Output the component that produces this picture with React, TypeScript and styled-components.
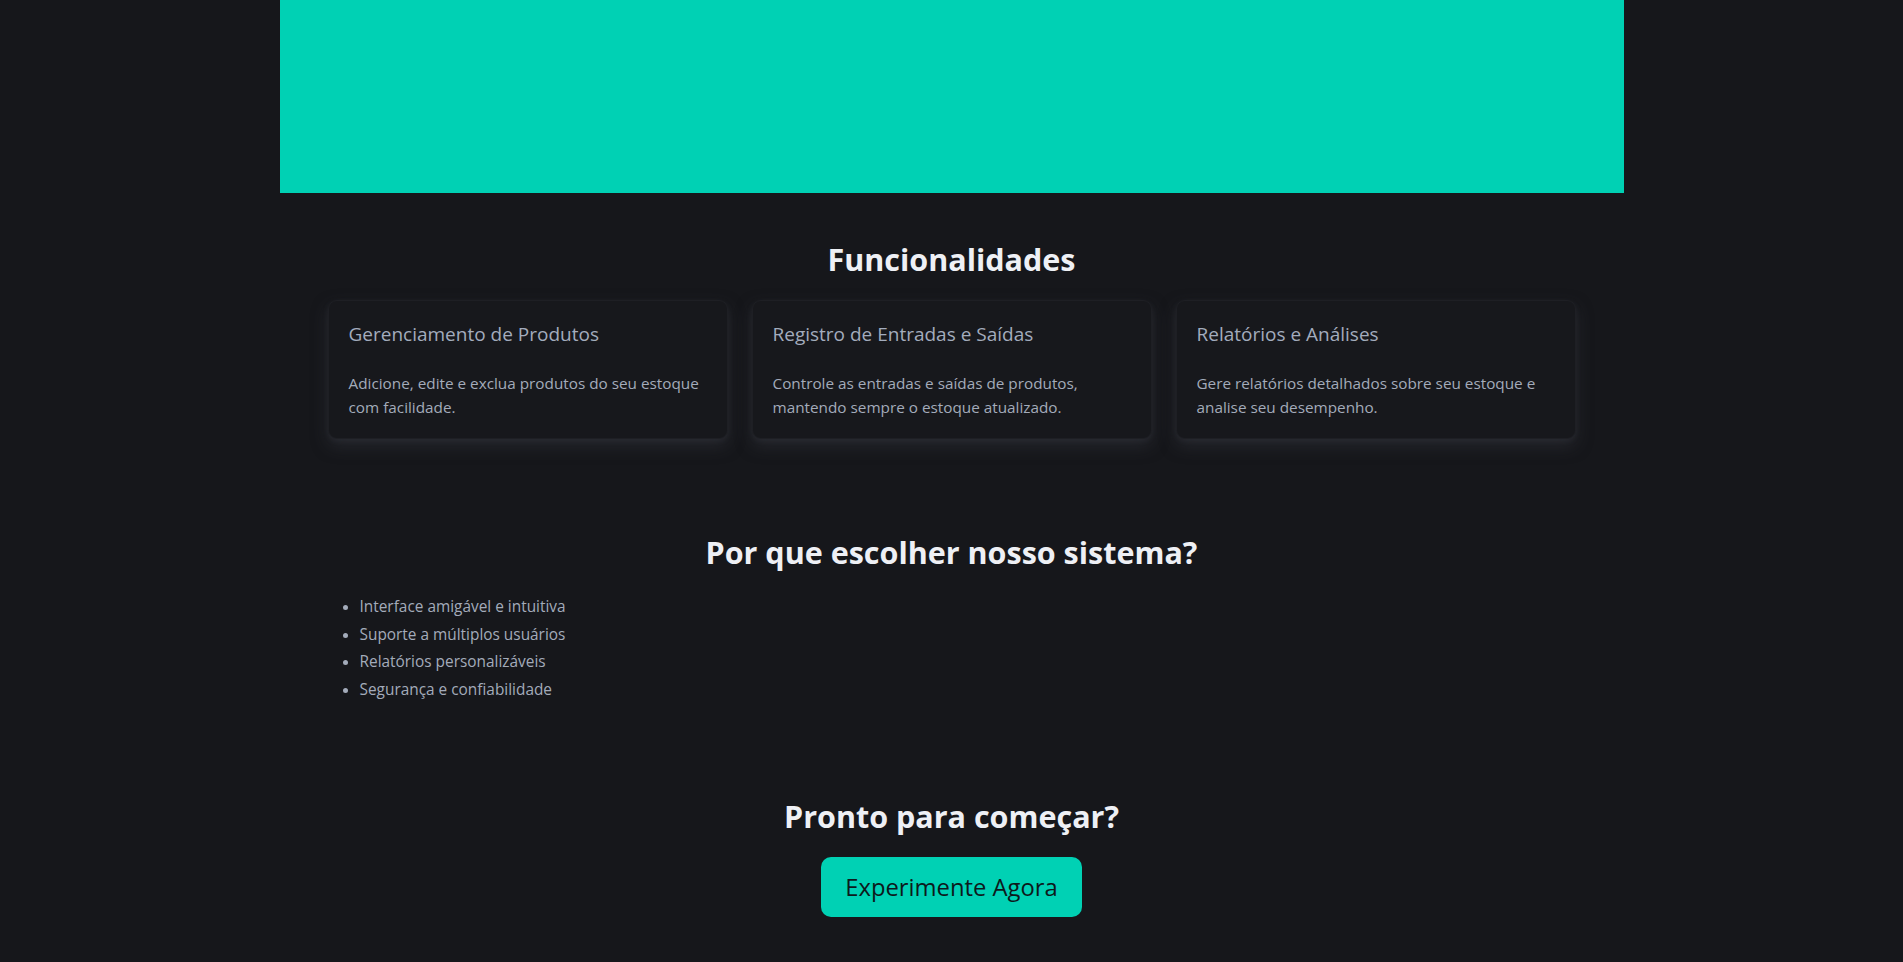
import React from "react";
import styled, { createGlobalStyle } from "styled-components";

const GlobalStyle = createGlobalStyle`
  html, body {
    margin: 0;
    padding: 0;
    background: #16171b;
  }
  body {
    font-family: "Open Sans", "Noto Sans", sans-serif;
    color: #a3abba;
  }
  * {
    box-sizing: border-box;
  }
`;

const Page = styled.main`
  min-height: 100vh;
  background: #16171b;
`;

const Hero = styled.div`
  width: 1344px;
  max-width: 100%;
  height: 193px;
  margin: 0 auto;
  background: #00d1b4;
`;

const Section = styled.section`
  max-width: 1344px;
  margin: 0 auto;
  padding: 47px 48px;
  display: flex;
  flex-direction: column;
`;

const Heading = styled.h2`
  margin: 0 0 22px;
  text-align: center;
  font-size: 30.5px;
  line-height: 38px;
  font-weight: 700;
  color: #eef0f5;
`;

const CardGrid = styled.div`
  display: grid;
  grid-template-columns: repeat(3, 1fr);
  gap: 24px;
`;

const Card = styled.article`
  padding: 20px 16px 19px 20px;
  border: 1px solid #1e1f24;
  border-radius: 9px;
  background: #17181c;
  box-shadow: 0 7px 16px rgba(54, 56, 64, 0.5), 0 2px 5px rgba(42, 44, 50, 0.45);
`;

const CardTitle = styled.h3`
  margin: 0 0 24px;
  font-size: 19px;
  line-height: 26px;
  font-weight: 400;
  color: #a3acbd;
`;

const CardText = styled.p`
  margin: 0;
  font-size: 15.3px;
  line-height: 24px;
  color: #a3abba;
`;

const List = styled.ul`
  margin: 0;
  padding-left: 32px;
  list-style: disc;
`;

const Item = styled.li`
  font-size: 15.4px;
  line-height: 27.6px;
  color: #a3abba;
  &::marker {
    color: #a3abba;
  }
`;

const Cta = styled.button`
  align-self: center;
  padding: 12px 24px;
  border: none;
  border-radius: 10px;
  background: #00d1b4;
  color: #0d1a1c;
  font-family: inherit;
  font-size: 23.8px;
  line-height: 36px;
  cursor: pointer;
`;

const features = [
  {
    title: "Gerenciamento de Produtos",
    text: "Adicione, edite e exclua produtos do seu estoque com facilidade.",
  },
  {
    title: "Registro de Entradas e Saídas",
    text: "Controle as entradas e saídas de produtos, mantendo sempre o estoque atualizado.",
  },
  {
    title: "Relatórios e Análises",
    text: "Gere relatórios detalhados sobre seu estoque e analise seu desempenho.",
  },
];

const reasons = [
  "Interface amigável e intuitiva",
  "Suporte a múltiplos usuários",
  "Relatórios personalizáveis",
  "Segurança e confiabilidade",
];

export default function App() {
  return (
    <>
      <GlobalStyle />
      <Page>
        <Hero />
        <Section>
          <Heading>Funcionalidades</Heading>
          <CardGrid>
            {features.map((f) => (
              <Card key={f.title}>
                <CardTitle>{f.title}</CardTitle>
                <CardText>{f.text}</CardText>
              </Card>
            ))}
          </CardGrid>
        </Section>
        <Section>
          <Heading>Por que escolher nosso sistema?</Heading>
          <List>
            {reasons.map((r) => (
              <Item key={r}>{r}</Item>
            ))}
          </List>
        </Section>
        <Section>
          <Heading>Pronto para começar?</Heading>
          <Cta>Experimente Agora</Cta>
        </Section>
      </Page>
    </>
  );
}
